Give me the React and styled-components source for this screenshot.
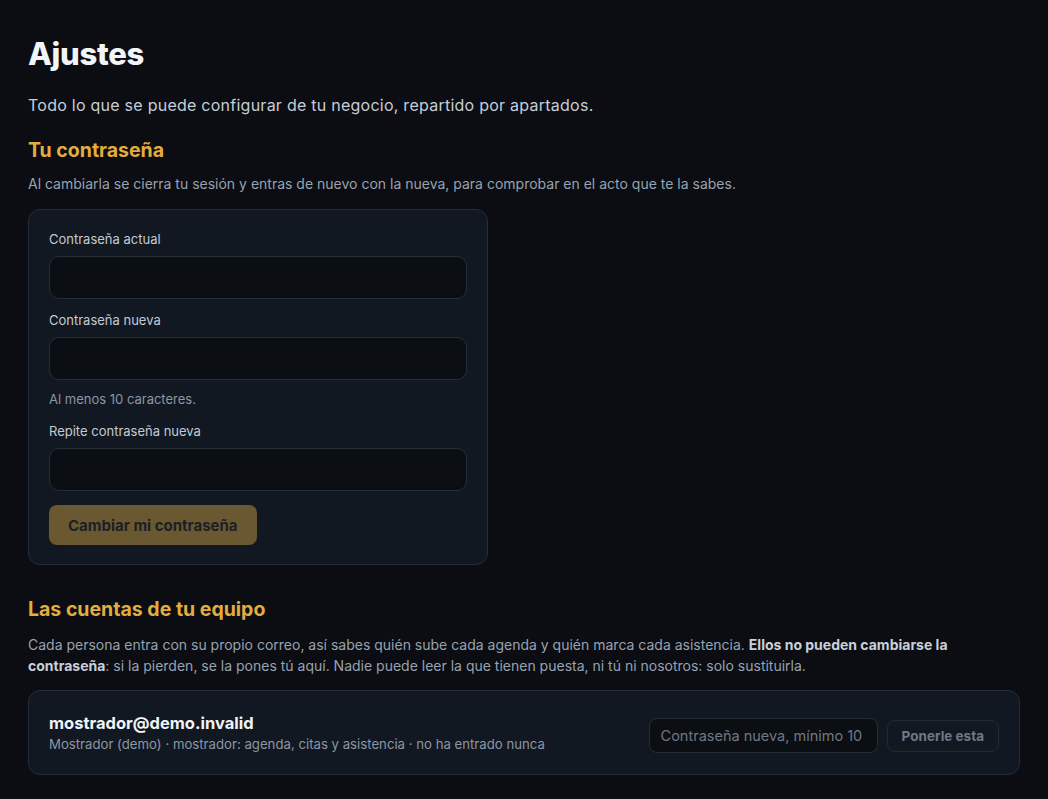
import React from 'react';
import styled, { createGlobalStyle } from 'styled-components';

const GlobalStyle = createGlobalStyle`
  html, body {
    margin: 0;
    padding: 0;
    background: #0b0d12;
  }
  body {
    font-family: Inter, "Noto Sans", "Liberation Sans", sans-serif;
    color: #e6e9ee;
  }
  * { box-sizing: border-box; }
`;

const Page = styled.main`
  padding: 34px 28px 40px;
  min-height: 100vh;
`;

const Title = styled.h1`
  margin: 0;
  font-size: 31px;
  font-weight: 800;
  color: #f1f4f8;
  line-height: 40px;
  letter-spacing: -0.3px;
`;

const Lead = styled.p`
  margin: 20px 0 0;
  font-size: 16px;
  line-height: 22px;
  color: #c6cdd7;
  letter-spacing: 0.25px;
`;

const SectionTitle = styled.h2`
  margin: ${({ $top }) => $top || 20}px 0 0;
  font-size: 19.5px;
  font-weight: 700;
  line-height: 26px;
  color: #e2ad3f;
`;

const Description = styled.p`
  margin: ${({ $top }) => $top || 10}px 0 0;
  max-width: 955px;
  font-size: 14px;
  line-height: 21px;
  color: #98a2b0;

  strong {
    color: #c9d0da;
    font-weight: 700;
  }
`;

const Card = styled.section`
  margin-top: ${({ $wide }) => ($wide ? 14 : 15)}px;
  width: ${({ $wide }) => ($wide ? '100%' : '460px')};
  max-width: 992px;
  background: #121821;
  border: 1px solid #262d38;
  border-radius: 12px;
  padding: ${({ $wide }) => ($wide ? '21px 20px' : '20px 20px 19px')};
`;

const Form = styled.form`
  display: flex;
  flex-direction: column;
`;

const Label = styled.label`
  display: block;
  font-size: 13px;
  line-height: 18px;
  color: #c3cad4;
  margin-top: ${({ $gap }) => $gap ?? 12}px;
`;

const Input = styled.input`
  display: block;
  width: 100%;
  height: 43px;
  margin-top: 8px;
  background: #0b0e13;
  border: 1px solid #262d38;
  border-radius: 10px;
  color: #e6e9ee;
  font: inherit;
  padding: 0 12px;
  outline: none;
`;

const Hint = styled.div`
  margin-top: 10px;
  font-size: 13px;
  line-height: 18px;
  color: #8c96a4;
`;

const PrimaryButton = styled.button`
  align-self: flex-start;
  margin-top: 14px;
  height: 40px;
  padding: 0 19px;
  border: none;
  border-radius: 8px;
  background: #6a5830;
  color: #1b1f26;
  font: inherit;
  font-size: 15px;
  font-weight: 700;
  cursor: not-allowed;
`;

const AccountRow = styled.div`
  display: flex;
  align-items: flex-end;
  justify-content: space-between;
  gap: 20px;
`;

const AccountInfo = styled.div`
  display: flex;
  flex-direction: column;
  gap: 1px;
`;

const Email = styled.div`
  font-size: 16.5px;
  font-weight: 700;
  color: #f1f4f8;
  line-height: 22px;
`;

const Meta = styled.div`
  font-size: 13.2px;
  line-height: 18px;
  color: #8c96a4;
`;

const Actions = styled.div`
  display: flex;
  align-items: center;
  gap: 9px;
`;

const SmallInput = styled.input`
  width: 229px;
  height: 35px;
  background: #0b0e13;
  border: 1px solid #262d38;
  border-radius: 8px;
  color: #e6e9ee;
  font: inherit;
  font-size: 14.5px;
  padding: 0 11px;
  outline: none;

  &::placeholder {
    color: #6f7884;
  }
`;

const GhostButton = styled.button`
  height: 32px;
  padding: 0 14px;
  background: #121821;
  border: 1px solid #232a34;
  border-radius: 8px;
  color: #6f7884;
  font: inherit;
  font-size: 13.5px;
  font-weight: 700;
  cursor: not-allowed;
`;

const App = () => {
  return (
    <>
      <GlobalStyle />
      <Page>
        <Title>Ajustes</Title>
        <Lead>Todo lo que se puede configurar de tu negocio, repartido por apartados.</Lead>

        <SectionTitle $top={21}>Tu contraseña</SectionTitle>
        <Description>
          Al cambiarla se cierra tu sesión y entras de nuevo con la nueva, para comprobar en el acto que te la sabes.
        </Description>
        <Card>
          <Form onSubmit={(e) => e.preventDefault()}>
            <Label $gap={0}>Contraseña actual</Label>
            <Input type="password" />
            <Label>Contraseña nueva</Label>
            <Input type="password" />
            <Hint>Al menos 10 caracteres.</Hint>
            <Label $gap={14}>Repite contraseña nueva</Label>
            <Input type="password" />
            <PrimaryButton type="submit" disabled>Cambiar mi contraseña</PrimaryButton>
          </Form>
        </Card>

        <SectionTitle $top={31}>Las cuentas de tu equipo</SectionTitle>
        <Description $top={12}>
          Cada persona entra con su propio correo, así sabes quién sube cada agenda y quién marca cada asistencia.{' '}
          <strong>Ellos no pueden cambiarse la contraseña</strong>: si la pierden, se la pones tú aquí. Nadie puede leer la que tienen puesta, ni tú ni nosotros: solo sustituirla.
        </Description>
        <Card $wide>
          <AccountRow>
            <AccountInfo>
              <Email>mostrador@demo.invalid</Email>
              <Meta>Mostrador (demo) · mostrador: agenda, citas y asistencia · no ha entrado nunca</Meta>
            </AccountInfo>
            <Actions>
              <SmallInput type="password" placeholder="Contraseña nueva, mínimo 10" />
              <GhostButton type="button" disabled>Ponerle esta</GhostButton>
            </Actions>
          </AccountRow>
        </Card>
      </Page>
    </>
  );
};

export default App;
